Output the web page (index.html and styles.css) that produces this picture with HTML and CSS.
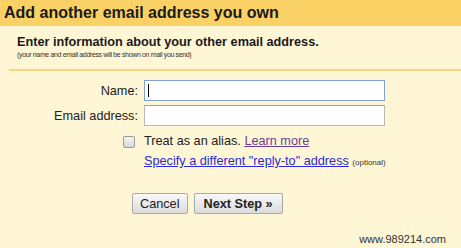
FILE: index.html
```html
<!DOCTYPE html>
<html lang="en">
<head>
  <meta charset="UTF-8">
  <title>Add another email address</title>
  <link rel="stylesheet" href="styles.css">
</head>
<body>

  <div class="title-bar">Add another email address you own</div>

  <div class="intro">
    <div class="intro-head">Enter information about your other email address.</div>
    <div class="intro-note">(your name and email address will be shown on mail you send)</div>
  </div>

  <div class="form-box">
    <div class="form-grid">
      <label class="field-label" for="name">Name:</label>
      <div class="field"><input type="text" id="name" class="text-input focused"><span class="caret"></span></div>

      <label class="field-label" for="email">Email address:</label>
      <div class="field"><input type="text" id="email" class="text-input"></div>

      <div class="check-cell"><span class="check-box"></span></div>
      <div class="alias-row">Treat as an alias. <a href="#" class="learn-link">Learn more</a></div>

      <div></div>
      <div class="reply-row"><a href="#" class="reply-link">Specify a different "reply-to" address</a> <span class="optional">(optional)</span></div>
    </div>

    <div class="buttons">
      <button class="btn">Cancel</button>
      <button class="btn btn-next">Next Step &raquo;</button>
    </div>
  </div>

  <div class="watermark">www.989214.com</div>

</body>
</html>
```

FILE: styles.css
```css
html, body {
  margin: 0;
  padding: 0;
  height: 100%;
  overflow: hidden;
  font-family: "Liberation Sans", Arial, sans-serif;
  background: #fff6d6;
  color: #222;
}

.title-bar {
  height: 26px;
  line-height: 26px;
  padding-left: 4px;
  background: #f9d164;
  font-size: 16px;
  font-weight: bold;
  color: #1a1a1a;
}

.intro {
  padding: 9px 0 0 17px;
  height: 34px;
}

.intro-head {
  font-size: 12.7px;
  font-weight: bold;
  line-height: 15px;
  color: #1a1a1a;
}

.intro-note {
  font-size: 7px;
  letter-spacing: -0.35px;
  line-height: 10px;
  color: #333;
}

.form-box {
  margin-left: 9px;
  border-top: 2px solid #f5d779;
  padding-top: 9px;
}

.form-grid {
  display: grid;
  grid-template-columns: 129px 241px;
  column-gap: 6px;
  row-gap: 4px;
  align-items: center;
}

.field-label {
  text-align: right;
  font-size: 12.7px;
  color: #222;
}

.field {
  position: relative;
}

.text-input {
  display: block;
  box-sizing: border-box;
  width: 241px;
  height: 21px;
  margin: 0;
  border: 1px solid #b9b9b9;
  border-top-color: #a0a0a0;
  background: #fff;
}

.text-input.focused {
  border: 1px solid #7f9fd6;
  outline: none;
}

.caret {
  position: absolute;
  left: 4px;
  top: 4px;
  width: 1px;
  height: 13px;
  background: #000;
}

.check-cell {
  text-align: right;
  padding-right: 3px;
  margin-top: 2px;
}

.check-box {
  display: inline-block;
  width: 10px;
  height: 10px;
  border: 1px solid #9a9a9a;
  border-radius: 2px;
  background: linear-gradient(#f4f4f4, #d8d8d8);
  vertical-align: middle;
}

.alias-row {
  font-size: 12.7px;
  margin-top: 2px;
  color: #222;
  white-space: nowrap;
}

.learn-link {
  color: #6b3d99;
}

.reply-row {
  font-size: 12.7px;
  margin-top: 0;
  white-space: nowrap;
}

.reply-link {
  color: #2b2bd1;
}

.optional {
  font-size: 8px;
  color: #333;
}

.buttons {
  display: flex;
  gap: 6px;
  margin-left: 123px;
  margin-top: 25px;
}

.btn {
  height: 21px;
  padding: 0 7px;
  font-family: "Liberation Sans", Arial, sans-serif;
  font-size: 12.7px;
  color: #222;
  border: 1px solid #a9a9a9;
  border-radius: 2px;
  background: linear-gradient(#f8f8f8, #dcdcdc);
}

.btn-next {
  font-weight: bold;
  padding: 0 9px;
}

.watermark {
  position: absolute;
  right: 15px;
  bottom: 3px;
  font-size: 11px;
  color: #333;
}
```
